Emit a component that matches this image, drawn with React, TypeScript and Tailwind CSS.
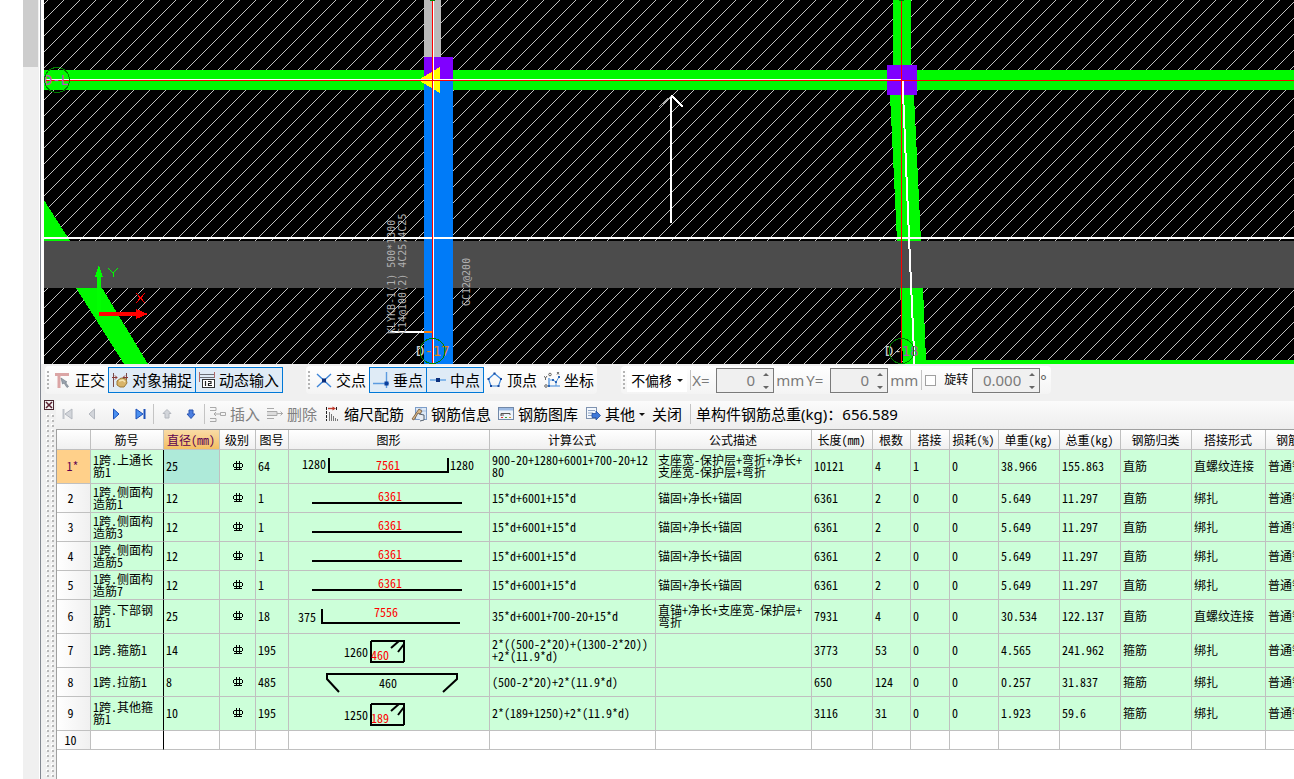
import type { ReactNode } from "react";
import clsx from "clsx";

interface Row {
  id: string;
  name: string;
  diameter: string;
  shape: string;
  drawing: ReactNode;
  formula: string;
  desc: string;
  length: string;
  count: string;
  lap: string;
  loss: string;
  unit: string;
  total: string;
  kind: string;
  joint: string;
  tall?: boolean;
}

const columns = [
  { label: "", width: "w-[34px]" },
  { label: "筋号", width: "w-[73px]" },
  { label: "直径(mm)", width: "w-[56px]", active: true },
  { label: "级别", width: "w-[36px]" },
  { label: "图号", width: "w-[33px]" },
  { label: "图形", width: "w-[201px]" },
  { label: "计算公式", width: "w-[166px]" },
  { label: "公式描述", width: "w-[156px]" },
  { label: "长度(mm)", width: "w-[61px]" },
  { label: "根数", width: "w-[38px]" },
  { label: "搭接", width: "w-[39px]" },
  { label: "损耗(%)", width: "w-[49px]" },
  { label: "单重(kg)", width: "w-[61px]" },
  { label: "总重(kg)", width: "w-[61px]" },
  { label: "钢筋归类", width: "w-[71px]" },
  { label: "搭接形式", width: "w-[74px]" },
  { label: "钢筋类型", width: "w-[70px]" },
];

function Drawing({ children, tall }: { children: ReactNode; tall?: boolean }) {
  return (
    <svg
      width="200"
      height={tall ? 33 : 28}
      className="block"
      fill="none"
      stroke="#000"
      strokeWidth="2"
      shapeRendering="crispEdges"
    >
      {children}
    </svg>
  );
}

function Dim({ x, y, red, anchor = "start", children }: { x: number; y: number; red?: boolean; anchor?: "start" | "middle"; children: string }) {
  return (
    <text x={x} y={y} textAnchor={anchor} stroke="none" fill={red ? "#f00" : "#000"}>
      {children}
    </text>
  );
}

const straightBar = (
  <Drawing>
    <Dim x={101} y={17} red anchor="middle">6361</Dim>
    <path d="M23 19H173" />
  </Drawing>
);

function Stirrup({ h, b }: { h: string; b: string }) {
  return (
    <Drawing tall>
      <Dim x={55} y={23}>{h}</Dim>
      <rect x="82" y="7" width="33" height="21" rx="1" />
      <path d="M102 14l8-7M109 18l6-8v-3" shapeRendering="auto" />
      <Dim x={82} y={26} red>{b}</Dim>
    </Drawing>
  );
}

const side = (id: string, n: string): Row => ({
  id, name: `1跨.侧面构造筋${n}`, diameter: "12", shape: "1", drawing: straightBar,
  formula: "15*d+6001+15*d", desc: "锚固+净长+锚固", length: "6361", count: "2", lap: "0", loss: "0",
  unit: "5.649", total: "11.297", kind: "直筋", joint: "绑扎",
});

const rows: Row[] = [
  {
    id: "1*", name: "1跨.上通长筋1", diameter: "25", shape: "64", tall: true,
    drawing: (
      <Drawing tall>
        <Dim x={13} y={19}>1280</Dim>
        <path d="M40 8V22H159V8" />
        <Dim x={99} y={20} red anchor="middle">7561</Dim>
        <Dim x={161} y={20}>1280</Dim>
      </Drawing>
    ),
    formula: "900-20+1280+6001+700-20+1280", desc: "支座宽-保护层+弯折+净长+支座宽-保护层+弯折",
    length: "10121", count: "4", lap: "1", loss: "0", unit: "38.966", total: "155.863", kind: "直筋", joint: "直螺纹连接",
  },
  side("2", "1"),
  side("3", "3"),
  side("4", "5"),
  side("5", "7"),
  {
    id: "6", name: "1跨.下部钢筋1", diameter: "25", shape: "18", tall: true,
    drawing: (
      <Drawing tall>
        <Dim x={9} y={22}>375</Dim>
        <path d="M33 9V23H171" />
        <Dim x={97} y={17} red anchor="middle">7556</Dim>
      </Drawing>
    ),
    formula: "35*d+6001+700-20+15*d", desc: "直锚+净长+支座宽-保护层+弯折",
    length: "7931", count: "4", lap: "0", loss: "0", unit: "30.534", total: "122.137", kind: "直筋", joint: "直螺纹连接",
  },
  {
    id: "7", name: "1跨.箍筋1", diameter: "14", shape: "195", tall: true,
    drawing: <Stirrup h="1260" b="460" />,
    formula: "2*((500-2*20)+(1300-2*20))+2*(11.9*d)", desc: "",
    length: "3773", count: "53", lap: "0", loss: "0", unit: "4.565", total: "241.962", kind: "箍筋", joint: "绑扎",
  },
  {
    id: "8", name: "1跨.拉筋1", diameter: "8", shape: "485",
    drawing: (
      <Drawing>
        <path d="M50 24L38 11V6H168V11L154 24" shapeRendering="auto" />
        <Dim x={99} y={20} anchor="middle">460</Dim>
      </Drawing>
    ),
    formula: "(500-2*20)+2*(11.9*d)", desc: "",
    length: "650", count: "124", lap: "0", loss: "0", unit: "0.257", total: "31.837", kind: "箍筋", joint: "绑扎",
  },
  {
    id: "9", name: "1跨.其他箍筋1", diameter: "10", shape: "195", tall: true,
    drawing: <Stirrup h="1250" b="189" />,
    formula: "2*(189+1250)+2*(11.9*d)", desc: "",
    length: "3116", count: "31", lap: "0", loss: "0", unit: "1.923", total: "59.6", kind: "箍筋", joint: "绑扎",
  },
];

/* ---------- drawing canvas ---------- */

function PlanView() {
  return (
    <svg className="block w-full h-[364px] bg-black" shapeRendering="crispEdges" aria-label="平面图">
      <defs>
        <pattern id="hatch" width="16" height="16" patternUnits="userSpaceOnUse">
          <path d="M0 16L16 0" stroke="#c0c0c0" strokeWidth="1" />
        </pattern>
      </defs>
      <g transform="translate(-44 0)">
        <rect x="44" y="0" width="100%" height="364" fill="url(#hatch)" />
        <rect x="44" y="241" width="100%" height="47" fill="#4c4c4c" />

        {/* beams */}
        <g fill="#00fa00">
          <rect x="44" y="70" width="100%" height="20" />
          <path d="M44 200L70 241H44zM76 288H102L148 364H124z" />
          <rect x="893" y="0" width="18" height="66" />
          <path d="M890 95H914L921 241H897zM900 288H923L926 360V364H903L901 311z" />
          <rect x="926" y="360" width="100%" height="4" />
        </g>
        <rect x="424" y="0" width="17" height="57" fill="#bababa" />
        <rect x="424" y="57" width="29" height="24" fill="#8000ff" />
        <rect x="424" y="80" width="29" height="284" fill="#007bf8" />
        <rect x="887" y="65" width="30" height="30" fill="#8000ff" />
        <path d="M418 80L440 67V93z" fill="#ff0" />

        {/* axes */}
        <rect x="44" y="79" width="858" height="1" fill="#fff" />
        <rect x="44" y="237" width="100%" height="2" fill="#fff" />
        <rect x="433" y="0" width="1" height="364" fill="#fff" />
        <path d="M902.5 80L909 237L914.5 364" stroke="#fff" strokeWidth="2" fill="none" />
        <rect x="44" y="80" width="100%" height="1" fill="#f00" />
        <rect x="432" y="0" width="1" height="364" fill="#f00" />
        <rect x="901" y="0" width="1" height="364" fill="#f00" />
        <rect x="430" y="0" width="5" height="1" fill="#008000" />
        <rect x="899" y="0" width="5" height="1" fill="#008000" />
        <rect x="390" y="331" width="34" height="2" fill="#fff" />
        <rect x="424" y="331" width="8" height="2" fill="#ff7f00" />

        {/* slab span arrow */}
        <rect x="670" y="96" width="2" height="127" fill="#fff" />
        <path d="M671.500 95.500L683 107" stroke="#fff" strokeWidth="1.500" />
        <path d="M671.500 95.500L659 107" stroke="#aaa" />

        {/* coordinate mark */}
        <path d="M97 313V277H95L99 265L103 277H101V313z" fill="#0f0" />
        <path d="M108 268L113 273L118 268M113 273V277" stroke="#0f0" fill="none" />
        <path d="M99 312H136V309L148 314L136 319V316H99z" fill="#f00" />
        <path d="M136 293L145 303M145 293L136 303" stroke="#f00" fill="none" />

        {/* axis bubbles */}
        <g className="font-['DejaVu_Sans_Mono',monospace] text-[14px]">
          <text x="44" y="85" fill="#c050c0">D-L</text>
          <text x="416" y="356" fill="#d0d0d0">D<tspan fill="#e08020">-17</tspan></text>
          <text x="885" y="356" fill="#c8c8c8">D-<tspan fill="#b050b0">18</tspan></text>
        </g>
        <g fill="none" stroke="#008000">
          <circle cx="57" cy="80" r="12.500" />
          <circle cx="432.500" cy="351" r="12.500" />
          <circle cx="901.500" cy="351" r="12.500" />
        </g>
        <g className="font-['DejaVu_Sans_Mono',monospace] text-[10px] whitespace-pre" fill="#b0b0b0">
          <text transform="translate(395 334) rotate(-90)">KLYKB-1(1) 500*1300</text>
          <text transform="translate(406 334) rotate(-90)">C14@100(2) 4C25;4C25</text>
          <text transform="translate(470 306) rotate(-90)">GC12@200</text>
        </g>
      </g>
    </svg>
  );
}

/* ---------- toolbar icons ---------- */

function Icon({ children, dim }: { children: ReactNode; dim?: boolean }) {
  return (
    <svg width="16" height="16" viewBox="0 0 16 16" fill="none" className={clsx("shrink-0", dim && "opacity-60")} aria-hidden="true">
      {children}
    </svg>
  );
}

const icons = {
  ortho: (
    <Icon>
      <path d="M0 2.500H14M4 1V16" stroke="#dba5a5" strokeWidth="3" />
      <path d="M6 6l6 4-1.500.5 3 4-1.500 1-3-4.500-1.500 1z" fill="#9aa3ae" stroke="#6c7680" strokeWidth=".6" />
    </Icon>
  ),
  snap: (
    <Icon>
      <path d="M1.500 1V15M14.500 1V8" stroke="#7a4a48" />
      <path d="M0 5.500H5M11 5.500H16M3 3.500L5 5.500L3 7.500M13 3.500L11 5.500L13 7.500" stroke="#8c3a36" />
      <path d="M5 9l4-3 5 1 1 4-3 4H8l-3-2z" fill="#d8b468" stroke="#9c7a38" />
      <path d="M7 9l4-1 2 2" stroke="#f5e3b0" strokeWidth="1.500" />
    </Icon>
  ),
  dyn: (
    <Icon>
      <path d="M.5 0V10M15.500 0V6" stroke="#b06a6a" />
      <path d="M1 2.500H15M1 5.500H15" stroke="#6b6f76" />
      <rect x="3.500" y="7.500" width="12" height="8" fill="#fff" stroke="#333" />
      <path d="M6.500 9V14M9 9.500H12V11.500H9.500V13.500H13" stroke="#222" strokeWidth="1.200" />
    </Icon>
  ),
  cross: (
    <Icon>
      <path d="M1 2L15 15M15 2L1 15" stroke="#3d85d8" strokeWidth="1.400" />
      <rect x="6" y="6.500" width="4" height="4" fill="#0b2f7c" />
    </Icon>
  ),
  perp: (
    <Icon>
      <path d="M0 11.500H16M13.500 0V16" stroke="#5b9be0" strokeWidth="1.400" />
      <rect x="11.500" y="9.500" width="4" height="4" fill="#0b3f9c" />
    </Icon>
  ),
  mid: (
    <Icon>
      <path d="M0 8H16" stroke="#86b8ea" strokeWidth="2" />
      <rect x="6" y="6" width="4" height="4" fill="#0b2f7c" />
    </Icon>
  ),
  vertex: (
    <Icon>
      <path d="M7.500 1.500L14 7L11.500 14H4L1.500 7z" stroke="#3d85d8" strokeWidth="1.200" />
      <path d="M6.500.5h2v2h-2zM13 6h2v2h-2zM10.500 13h2v2h-2zM3 13h2v2H3zM.5 6h2v2h-2z" fill="#16479c" />
    </Icon>
  ),
  coord: (
    <Icon>
      <path d="M5 6V14H16" stroke="#3d85d8" strokeWidth="1.200" />
      <path d="M6 8L9 8L12 10L15 5M12 10V14" stroke="#5b9be0" />
      <path d="M8 7h2v2H8zM11 9h2v2h-2zM14 4h2v2h-2zM4 13h2v2H4z" fill="#2a66b8" />
      <path d="M0 4l1.500 2L3 4M1.500 6v2M13 0l2 2.500M15 0l-2 2.500" stroke="#444" strokeWidth=".8" />
      <circle cx="6" cy="2.500" r="1.300" stroke="#444" strokeWidth=".8" />
      <circle cx="2" cy="14" r="1.300" stroke="#444" strokeWidth=".8" />
    </Icon>
  ),
  insert: (
    <Icon dim>
      <path d="M0 1.500h6v3h-6M0 12.500h6v3h-6M10.500 6.500h5v3h-5z" stroke="#777" />
      <path d="M10 8H4M6 6L4 8l2 2" stroke="#777" />
    </Icon>
  ),
  remove: (
    <Icon dim>
      <path d="M0 2.500h7M0 5.500h10v4H0M0 12.500h7" stroke="#777" fill="#ccc" />
      <path d="M10 7.500H16M13.500 5.500l2 2-2 2" stroke="#777" />
    </Icon>
  ),
  scale: (
    <Icon>
      <path d="M2.500 1V15M12.500 1V4" stroke="#222" strokeDasharray="3 1" />
      <path d="M4 2.500H10" stroke="#c0392b" strokeWidth="1.400" />
      <path d="M8.500 0.500L12 2.500L8.500 4.500z" fill="#c0392b" />
      <path d="M5.500 6V15M7.500 8V15M9.500 10V15M11.500 12V15M13.500 13V15" stroke="#777" />
    </Icon>
  ),
  info: (
    <Icon>
      <rect x="4.500" y="1.500" width="11" height="12" fill="#dce8f6" stroke="#7b9cc8" />
      <path d="M5 5H15M10 2V13" stroke="#a8c0e0" />
      <path d="M1 13L8 3l3 2-2 3-2-1-4 7z" fill="#d9b98a" stroke="#6b5238" strokeWidth=".8" />
      <path d="M8 8l5 1v5l-4 1" stroke="#55606e" fill="#e8ecf2" />
    </Icon>
  ),
  library: (
    <Icon>
      <rect x=".5" y="1.500" width="15" height="12" fill="#eef4fb" stroke="#7188a8" />
      <rect x="1" y="2" width="14" height="2.500" fill="#9dbbe4" />
      <path d="M3 10V7.500H12V9M3 9H6" stroke="#555" />
      <path d="M3 11.500H5" stroke="#d33" /><path d="M7 11.500H9" stroke="#3a3" /><path d="M11 11.500H13" stroke="#d93" />
    </Icon>
  ),
  other: (
    <Icon>
      <rect x="1.500" y="1.500" width="10" height="11" fill="#f4f8fd" stroke="#7f93b0" />
      <path d="M3 4.500H10M3 7H8M3 9.500H7" stroke="#8fa5c4" />
      <path d="M7 7.500H11V5L15.500 9.500L11 14V11.500H7z" fill="#3f78d8" stroke="#1f4ba0" strokeWidth=".8" />
    </Icon>
  ),
  first: <Icon><path d="M3.500 3V13" stroke="#c0c4ca" strokeWidth="2" /><path d="M12 3V13L5 8z" fill="#d2d5da" stroke="#b4b8bf" /></Icon>,
  prev: <Icon><path d="M10.500 3V13L5 8z" fill="#d2d5da" stroke="#b4b8bf" /></Icon>,
  next: <Icon><path d="M5.500 3V13L11 8z" fill="#4a90f0" stroke="#1c50b8" /></Icon>,
  last: <Icon><path d="M12.500 3V13" stroke="#1c50b8" strokeWidth="2" /><path d="M4 3V13L11 8z" fill="#4a90f0" stroke="#1c50b8" /></Icon>,
  up: <Icon><path d="M8 3.500L12 7.500H10V12H6V7.500H4z" fill="#d2d5da" stroke="#b4b8bf" /></Icon>,
  down: <Icon><path d="M8 12.500L12 8H10V4H6V8H4z" fill="#4a7ee0" stroke="#2a55b0" /></Icon>,
};

function Caret() {
  return (
    <svg width="6" height="3" viewBox="0 0 6 3" className="shrink-0" aria-hidden="true">
      <path d="M0 0H6L3 3z" fill="#111" />
    </svg>
  );
}

function Grip() {
  return (
    <svg width="2" height="19" className="shrink-0 mx-0.5" aria-hidden="true">
      <path d="M1 0V19" stroke="#b4b4b4" strokeWidth="2" strokeDasharray="2 2" />
    </svg>
  );
}

function Separator() {
  return <span className="w-px h-5 mx-px bg-[#c4c4c4] shrink-0" />;
}

function ToolButton({ icon, label, pressed, disabled, menu }: { icon?: ReactNode; label: string; pressed?: boolean; disabled?: boolean; menu?: boolean }) {
  return (
    <button
      type="button"
      disabled={disabled}
      aria-pressed={pressed}
      className={clsx(
        "h-[26px] px-[3px] flex items-center gap-1 shrink-0 border -mr-px",
        pressed ? "border-[#0078d7] bg-[#dfebf6]" : "border-transparent",
        disabled && "text-[#808080]"
      )}
    >
      {icon}
      {label}
      {menu && <Caret />}
    </button>
  );
}

function NavButton({ icon, label, disabled }: { icon: ReactNode; label: string; disabled?: boolean }) {
  return (
    <button type="button" aria-label={label} disabled={disabled} className="w-6 h-6 flex items-center justify-center shrink-0">
      {icon}
    </button>
  );
}

function SpinBox({ label, value, wide }: { label: string; value: string; wide?: boolean }) {
  return (
    <span className={clsx("h-[25px] flex items-center border border-[#7a7a7a] bg-[#f0f0f0] shrink-0", wide ? "w-[68px]" : "w-[58px]")}>
      <input aria-label={label} defaultValue={value} disabled className="min-w-0 flex-1 bg-transparent text-right pr-1 text-[#7a7a7a]" />
      <svg width="14" height="21" className="shrink-0" aria-hidden="true">
        <path d="M4 6L7 3L10 6zM4 16L7 19L10 16z" fill="#666" />
      </svg>
    </span>
  );
}

function ToolGroup({ children }: { children: ReactNode }) {
  return <div className="h-7 flex items-center shrink-0 rounded-sm bg-linear-to-b from-white to-[#f4f4f4]">{children}</div>;
}

function SnapBar() {
  return (
    <div className="h-8 pl-1 flex items-center gap-6 overflow-hidden text-[15px]">
      <ToolGroup>
        <Grip />
        <ToolButton icon={icons.ortho} label="正交" />
        <ToolButton icon={icons.snap} label="对象捕捉" pressed />
        <ToolButton icon={icons.dyn} label="动态输入" pressed />
      </ToolGroup>
      <ToolGroup>
        <Grip />
        <ToolButton icon={icons.cross} label="交点" />
        <ToolButton icon={icons.perp} label="垂点" pressed />
        <ToolButton icon={icons.mid} label="中点" pressed />
        <ToolButton icon={icons.vertex} label="顶点" />
        <ToolButton icon={icons.coord} label="坐标" />
      </ToolGroup>
      <ToolGroup>
        <Grip />
        <span className="h-6 flex items-center bg-white pl-1 pr-1 mr-0.5">
          <select aria-label="偏移方式" className="w-[40px] mr-1.5 appearance-none overflow-hidden text-[14px]">
            <option>不偏移</option>
          </select>
          <Caret />
        </span>
        <Separator />
        <span className="w-6 text-[#7a7a7a]">X=</span>
        <SpinBox label="X" value="0" />
        <span className="px-0.5 text-[#7a7a7a]">mm</span>
        <span className="w-6 text-[#7a7a7a]">Y=</span>
        <SpinBox label="Y" value="0" />
        <span className="px-0.5 text-[#7a7a7a]">mm</span>
        <Separator />
        <label className="flex items-center gap-2 pl-0.5 mr-1 text-[12px]">
          <input type="checkbox" className="appearance-none size-[11px] border border-[#a0a0a0] bg-white" />
          旋转
        </label>
        <SpinBox label="旋转角度" value="0.000" wide />
        <span className="pr-1 text-[#555]">°</span>
      </ToolGroup>
    </div>
  );
}

function RebarBar() {
  return (
    <div className="h-7 pb-0.5 flex items-center overflow-hidden text-[15px] bg-linear-to-b from-[#fbfbfb] to-[#eeeeee]">
      <NavButton icon={icons.first} label="首条" disabled />
      <NavButton icon={icons.prev} label="上一条" disabled />
      <NavButton icon={icons.next} label="下一条" />
      <NavButton icon={icons.last} label="末条" />
      <Separator />
      <NavButton icon={icons.up} label="上移" disabled />
      <NavButton icon={icons.down} label="下移" />
      <Separator />
      <ToolButton icon={icons.insert} label="插入" disabled />
      <ToolButton icon={icons.remove} label="删除" disabled />
      <ToolButton icon={icons.scale} label="缩尺配筋" />
      <ToolButton icon={icons.info} label="钢筋信息" />
      <ToolButton icon={icons.library} label="钢筋图库" />
      <ToolButton icon={icons.other} label="其他" menu />
      <ToolButton label="关闭" />
      <span className="ml-1 flex items-center gap-1 shrink-0">
        <Separator />
        单构件钢筋总重(kg)：656.589
      </span>
    </div>
  );
}

/* ---------- rebar table ---------- */

function GradeMark() {
  return (
    <svg width="10" height="10" viewBox="0 0 10 10" className="mx-auto" fill="none" stroke="#000" shapeRendering="crispEdges" aria-label="HRB400">
      <path d="M3.500 0V9M6.500 0V9M1 2.500H9M0 4.500H1M9 4.500H10M.5 3V6M9.500 3V6M1 6.500H9M1 8.500H9" />
    </svg>
  );
}

function Cell({ children, className }: { children?: ReactNode; className?: string }) {
  return <td className={clsx("px-0.5 pb-px border-r border-b border-[#c0c0c0] break-all [line-break:anywhere]", className)}>{children}</td>;
}

function RebarTable() {
  return (
    <table className="table-fixed w-[1279px] border-separate border-spacing-0 text-[12px] leading-[12px] font-['Noto_Sans_Mono_CJK_SC','Noto_Sans_CJK_SC',sans-serif]">
      <colgroup>
        {columns.map((c, i) => <col key={i} className={c.width} />)}
      </colgroup>
      <thead>
        <tr className="h-[20px]">
          {columns.map((c, i) => (
            <th
              key={i}
              scope="col"
              className={clsx(
                "border-r border-b border-[#c0c0c0] pr-px font-normal whitespace-nowrap bg-linear-to-b",
                c.active ? "from-[#f9dba6] to-[#f3bf62] text-[#5c0050]" : "from-white to-[#f0f0f0]"
              )}
            >
              {c.label}
            </th>
          ))}
        </tr>
      </thead>
      <tbody>
        {rows.map((r, i) => (
          <tr key={r.id} className={clsx("bg-[#ccffd9]", r.tall ? "h-[34px]" : "h-[29px]")}>
            <th
              scope="row"
              className={clsx(
                "border-r border-b border-[#c0c0c0] pb-px font-normal",
                i === 0 ? "pr-0.5 bg-[#ffd08a] text-[#5c0050]" : "pr-1.5 bg-linear-to-r from-white to-[#f0f0f0]"
              )}
            >
              {r.id}
            </th>
            <Cell className="border-r-black">{r.name}</Cell>
            <Cell className={i === 0 ? "bg-[#aeead9]" : undefined}>{r.diameter}</Cell>
            <Cell><GradeMark /></Cell>
            <Cell>{r.shape}</Cell>
            <td className="p-0 border-r border-b border-[#c0c0c0]">{r.drawing}</td>
            <Cell>{r.formula}</Cell>
            <Cell>{r.desc}</Cell>
            <Cell>{r.length}</Cell>
            <Cell>{r.count}</Cell>
            <Cell>{r.lap}</Cell>
            <Cell>{r.loss}</Cell>
            <Cell>{r.unit}</Cell>
            <Cell>{r.total}</Cell>
            <Cell>{r.kind}</Cell>
            <Cell>{r.joint}</Cell>
            <Cell>普通钢筋</Cell>
          </tr>
        ))}
        <tr className="h-[19px]">
          <th scope="row" className="border-r border-b border-[#c0c0c0] pr-1.5 pb-px font-normal bg-linear-to-r from-white to-[#f0f0f0]">10</th>
          {columns.slice(1).map((c, i) => (
            <Cell key={c.label} className={i === 0 ? "border-r-black" : undefined} />
          ))}
        </tr>
      </tbody>
    </table>
  );
}

function DockGrip() {
  return (
    <div className="w-[15px] shrink-0 flex flex-col items-center bg-[#f0f0f0]">
      <button type="button" aria-label="关闭面板" className="mt-px">
        <svg width="10" height="10" viewBox="0 0 10 10" className="block" fill="none">
          <rect x=".5" y=".5" width="9" height="9" fill="#f4f4f4" stroke="#4a2530" />
          <path d="M2 2L8 8M8 2L2 8" stroke="#5a2030" strokeWidth="1.500" />
        </svg>
      </button>
      <svg className="w-full flex-1 mt-1" aria-hidden="true">
        <defs>
          <pattern id="dots" width="5" height="5" patternUnits="userSpaceOnUse" x="5">
            <rect width="2" height="2" fill="#fff" />
            <rect x="1" y="1" width="2" height="2" fill="#b8b8b8" />
          </pattern>
        </defs>
        <rect x="4" width="10" height="100%" fill="url(#dots)" />
      </svg>
    </div>
  );
}

export default function App() {
  return (
    <div className="min-h-screen flex bg-white text-black font-['Noto_Sans','Noto_Sans_CJK_SC',sans-serif] overflow-hidden">
      {/* outer scroll bar */}
      <div className="w-4 ml-[23px] shrink-0 bg-[#f0f0f0]">
        <div className="h-[67px] mr-px bg-[#cdcdcd]" />
      </div>

      <main className="flex-1 min-w-0 ml-px border-l border-[#828790] flex flex-col bg-[#f0f0f0]">
        <div className="pl-[3px] bg-white">
          <PlanView />
        </div>
        <SnapBar />
        <section className="flex-1 flex pt-[3px]">
          <DockGrip />
          <div className="flex-1 min-w-0 flex flex-col pt-0.5">
            <RebarBar />
            <div className="flex-1 bg-white border-t border-l border-[#a0a0a0] overflow-hidden">
              <RebarTable />
            </div>
          </div>
        </section>
      </main>
    </div>
  );
}
